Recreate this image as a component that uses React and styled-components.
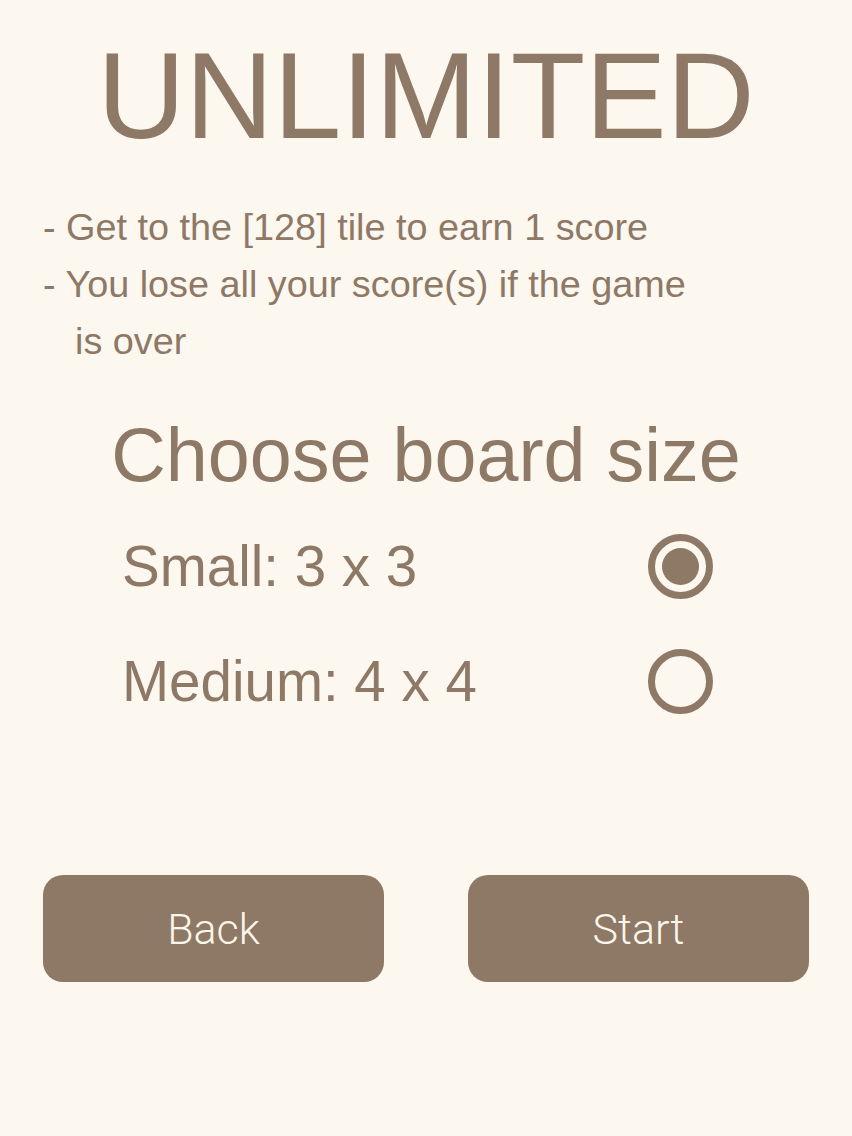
import React, { useState } from "react";
import styled, { createGlobalStyle } from "styled-components";

const ink = "#8e7866";
const paper = "#fcf7ef";

const Global = createGlobalStyle`
  html, body {
    margin: 0;
    padding: 0;
    background: ${paper};
  }
  body {
    font-family: "Liberation Sans", Arial, Helvetica, sans-serif;
    color: ${ink};
  }
`;

const Page = styled.div`
  width: 852px;
  min-height: 1136px;
  box-sizing: border-box;
  padding-top: 35px;
  display: flex;
  flex-direction: column;
  background: ${paper};
`;

const Title = styled.h1`
  margin: 0;
  font-weight: 400;
  font-size: 122px;
  line-height: 122px;
  text-align: center;
  color: ${ink};
`;

const Rules = styled.div`
  margin-top: 42px;
  padding-left: 43px;
  display: flex;
  flex-direction: column;
`;

const Rule = styled.div`
  font-size: 37.8px;
  line-height: 57px;
  white-space: pre;
  padding-left: ${(p) => (p.$indent ? "32px" : "0")};
`;

const Heading = styled.h2`
  margin: 47px 0 0;
  font-weight: 400;
  font-size: 75.5px;
  line-height: 76px;
  text-align: center;
`;

const Options = styled.div`
  margin-top: 16px;
  display: flex;
  flex-direction: column;
`;

const Option = styled.label`
  height: 115px;
  display: flex;
  align-items: center;
  justify-content: space-between;
  padding: 0 139px 0 122px;
  cursor: pointer;
`;

const OptionLabel = styled.span`
  font-size: 56.5px;
  line-height: 56px;
`;

const Radio = styled.span`
  width: 65px;
  height: 65px;
  box-sizing: border-box;
  border: 7px solid ${ink};
  border-radius: 50%;
  display: flex;
  align-items: center;
  justify-content: center;

  &::after {
    content: "";
    display: ${(p) => (p.$checked ? "block" : "none")};
    width: 37px;
    height: 37px;
    border-radius: 50%;
    background: ${ink};
  }
`;

const Actions = styled.div`
  margin-top: 136px;
  padding: 0 43px;
  display: flex;
  justify-content: space-between;
`;

const Button = styled.button`
  width: 341px;
  height: 107px;
  border: none;
  border-radius: 20px;
  background: ${ink};
  color: #fcf6ea;
  font-family: Roboto, "Liberation Sans", sans-serif;
  font-weight: 300;
  font-size: 43px;
  cursor: pointer;
`;

const sizes = [
  { id: "small", label: "Small: 3 x 3" },
  { id: "medium", label: "Medium: 4 x 4" },
];

export default function App() {
  const [size, setSize] = useState("small");
  return (
    <>
      <Global />
      <Page>
        <Title>UNLIMITED</Title>
        <Rules>
          <Rule>- Get to the [128] tile to earn 1 score</Rule>
          <Rule>- You lose all your score(s) if the game</Rule>
          <Rule $indent>is over</Rule>
        </Rules>
        <Heading>Choose board size</Heading>
        <Options>
          {sizes.map((s) => (
            <Option key={s.id} onClick={() => setSize(s.id)}>
              <OptionLabel>{s.label}</OptionLabel>
              <Radio $checked={size === s.id} />
            </Option>
          ))}
        </Options>
        <Actions>
          <Button>Back</Button>
          <Button>Start</Button>
        </Actions>
      </Page>
    </>
  );
}
